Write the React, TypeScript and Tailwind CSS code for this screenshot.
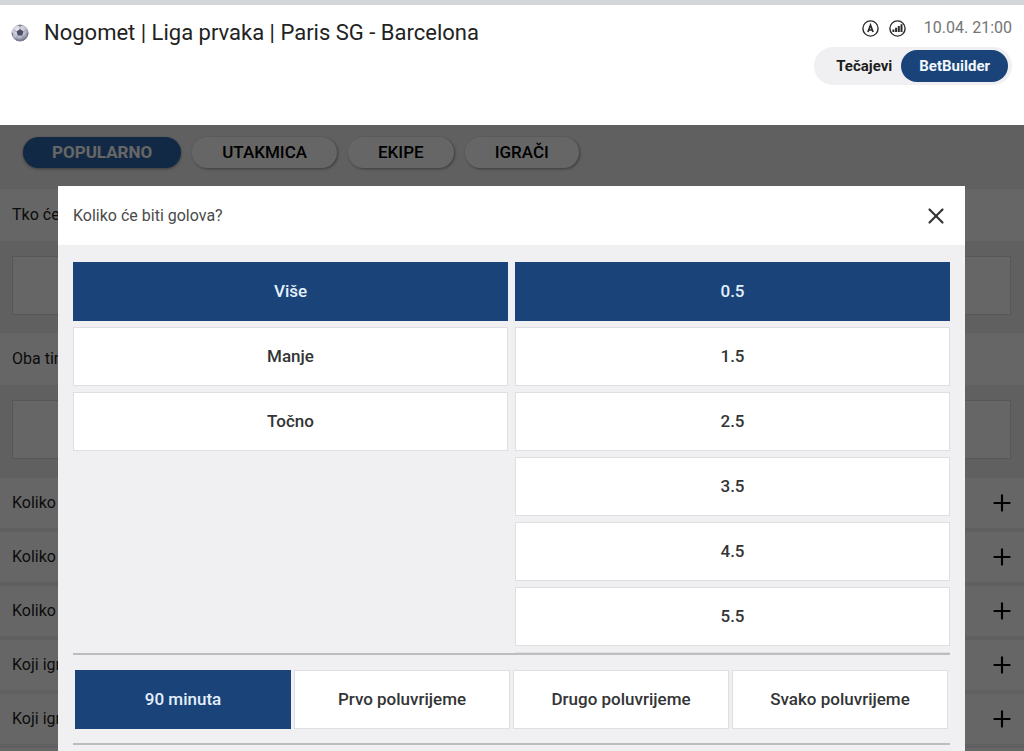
import { X, Plus } from "lucide-react";

const FILTERS = ["POPULARNO", "UTAKMICA", "EKIPE", "IGRAČI"];
const OPEN_MARKETS = ["Tko će", "Oba tima"];
const CLOSED_MARKETS = ["Koliko", "Koliko", "Koliko", "Koji igrač", "Koji igrač", ""];
const SIDES = ["Više", "Manje", "Točno"];
const LINES = ["0.5", "1.5", "2.5", "3.5", "4.5", "5.5", ""];
const PERIODS = ["90 minuta", "Prvo poluvrijeme", "Drugo poluvrijeme", "Svako poluvrijeme"];

interface OptionProps {
  label: string;
  active: boolean;
}

function Option({ label, active }: OptionProps) {
  return (
    <button
      type="button"
      aria-pressed={active}
      className={
        active
          ? "h-[59px] w-full shrink-0 border border-[#1a4479] bg-[#1a4479] text-[17px] font-medium text-[#e4effb]"
          : "h-[59px] w-full shrink-0 border border-[#dfdfe1] bg-white text-[17px] font-medium text-[#333436]"
      }
    >
      {label}
    </button>
  );
}

function BallIcon() {
  return (
    <svg viewBox="0 0 18 18" className="size-[18px]" aria-hidden="true">
      <defs>
        <radialGradient id="ball" cx="0.4" cy="0.3" r="0.75">
          <stop offset="0" stopColor="#eeeef4" />
          <stop offset="0.6" stopColor="#b9bbc9" />
          <stop offset="1" stopColor="#5f6276" />
        </radialGradient>
      </defs>
      <circle cx="9" cy="9" r="8.5" fill="url(#ball)" />
      <path d="M9 5l3.500 2.500-1.300 4.100H6.800L5.500 7.500z" fill="#4b4e66" />
      <g fill="#777a8e">
        <path d="M6 1.300l3 1.300 3-1.300-3-.6z" />
        <path d="M.8 8l1.600 2-.5 2.600L.8 10z" />
        <path d="M17.200 8l-1.600 2 .5 2.600 1.100-2.600z" />
        <path d="M4.500 14.700l2.800.5.700 2L5 16.200z" />
        <path d="M13.500 14.700l-2.800.5-.7 2 3-1z" />
      </g>
      <path
        d="M9 5V2.600M12.500 7.500l2.800-1M11.200 11.600l1.500 3M6.800 11.600l-1.500 3M5.500 7.500l-2.800-1"
        stroke="#8d90a1"
        strokeWidth="0.7"
        fill="none"
      />
    </svg>
  );
}

function AnalysisIcon() {
  return (
    <svg viewBox="0 0 17 17" className="size-[17px]" fill="none" stroke="#2b2b2b" aria-hidden="true">
      <circle cx="8.500" cy="8.500" r="7.600" strokeWidth="1.400" />
      <path d="M5.900 12l2.600-6.800 2.600 6.800M6.700 10h3.600" strokeWidth="1.700" />
    </svg>
  );
}

function StatsIcon() {
  return (
    <svg viewBox="0 0 17 17" className="size-[17px]" fill="none" stroke="#2b2b2b" aria-hidden="true">
      <circle cx="8.500" cy="8.500" r="7.600" strokeWidth="1.400" />
      <path d="M4.400 12V9.500M7.100 12V7.800M9.800 12V6M12.500 12V4.300" strokeWidth="2" />
    </svg>
  );
}

function MatchHeader() {
  return (
    <header className="flex h-[125px] shrink-0 items-start justify-between border-t-[5px] border-[#d3d6d8] bg-white pr-3 pl-[11px]">
      <div className="flex items-center gap-[15px] pt-3">
        <BallIcon />
        <h1 className="text-[22px] leading-8 text-[#222]">
          Nogomet | Liga prvaka | Paris SG - Barcelona
        </h1>
      </div>
      <div className="flex flex-col items-end gap-[7px] pt-[11px]">
        <div className="flex items-center gap-[10px]">
          <AnalysisIcon />
          <StatsIcon />
          <time className="pl-2 text-[16px] leading-6 text-[#757575]">10.04. 21:00</time>
        </div>
        <div className="flex h-[38px] items-center rounded-full bg-[#f0f0f2] pr-1 pl-[22px]">
          <button type="button" className="pr-[9px] text-[15px] font-bold text-[#1c1c1c]">
            Tečajevi
          </button>
          <button
            type="button"
            className="h-8 rounded-full bg-[#1a4479] px-[18px] text-[15px] font-bold text-[#f1f7fd]"
          >
            BetBuilder
          </button>
        </div>
      </div>
    </header>
  );
}

function MarketList() {
  return (
    <div className="bg-[#f0f0f2] text-[16px] text-[#222]">
      <nav className="flex h-16 gap-[11px] pt-3 pl-[23px] text-[17px]">
        {FILTERS.map((name, i) => (
          <button
            key={name}
            type="button"
            className={
              i === 0
                ? "h-[31px] rounded-full bg-[#2f66ad] px-[29px] font-bold text-white shadow-[0_1px_3px_rgba(0,0,0,0.4)]"
                : "h-[31px] rounded-full bg-white px-[30px] font-medium text-black shadow-[1px_1px_3px_rgba(0,0,0,0.4)]"
            }
          >
            {name}
          </button>
        ))}
      </nav>
      {OPEN_MARKETS.map((name) => (
        <section key={name}>
          <h2 className="h-[52px] bg-white pl-3 leading-[52px]">{name}</h2>
          <div className="px-[13px] pt-[15px] pb-[18px] pl-3">
            <div className="h-[59px] border border-[#dadadc] bg-white" />
          </div>
        </section>
      ))}
      <ul className="flex flex-col gap-1 pt-px">
        {CLOSED_MARKETS.map((name, i) => (
          <li key={i} className="flex h-[50px] items-center justify-between bg-white pr-[9px] pl-3">
            {name}
            <button type="button" aria-label="Otvori">
              <Plus className="size-[26px] text-black" strokeWidth={2} />
            </button>
          </li>
        ))}
      </ul>
    </div>
  );
}

function GoalsDialog() {
  return (
    <div role="dialog" aria-labelledby="goals-title" className="w-full bg-[#f0f0f2]">
      <div className="flex h-[59px] items-center justify-between bg-white pr-4 pl-[15px]">
        <h2 id="goals-title" className="text-[16px] text-[#4a4a4a]">
          Koliko će biti golova?
        </h2>
        <button type="button" aria-label="Zatvori">
          <X className="size-[26px] text-[#333]" strokeWidth={2} />
        </button>
      </div>
      <div className="px-[15px] pt-[17px]">
        <div className="grid h-[393px] grid-cols-2 gap-[7px] overflow-hidden border-b-2 border-[#bdbdbf]">
          <div className="flex flex-col gap-[6px]">
            {SIDES.map((side) => (
              <Option key={side} label={side} active={side === "Više"} />
            ))}
          </div>
          <div className="flex flex-col gap-[6px]">
            {LINES.map((line) => (
              <Option key={line} label={line} active={line === "0.5"} />
            ))}
          </div>
        </div>
        <div className="grid grid-cols-4 gap-[3px] border-b-2 border-[#bdbdbf] px-[2px] pt-[15px] pb-[14px]">
          {PERIODS.map((period) => (
            <Option key={period} label={period} active={period === "90 minuta"} />
          ))}
        </div>
        <div className="h-20" />
      </div>
    </div>
  );
}

export default function App() {
  return (
    <div className="flex h-screen flex-col overflow-hidden font-[Roboto,sans-serif]">
      <MatchHeader />
      <main className="relative flex-1 overflow-hidden">
        <MarketList />
        <div className="absolute inset-0 bg-black/60 pt-[61px] pr-[59px] pl-[58px]">
          <GoalsDialog />
        </div>
      </main>
    </div>
  );
}
